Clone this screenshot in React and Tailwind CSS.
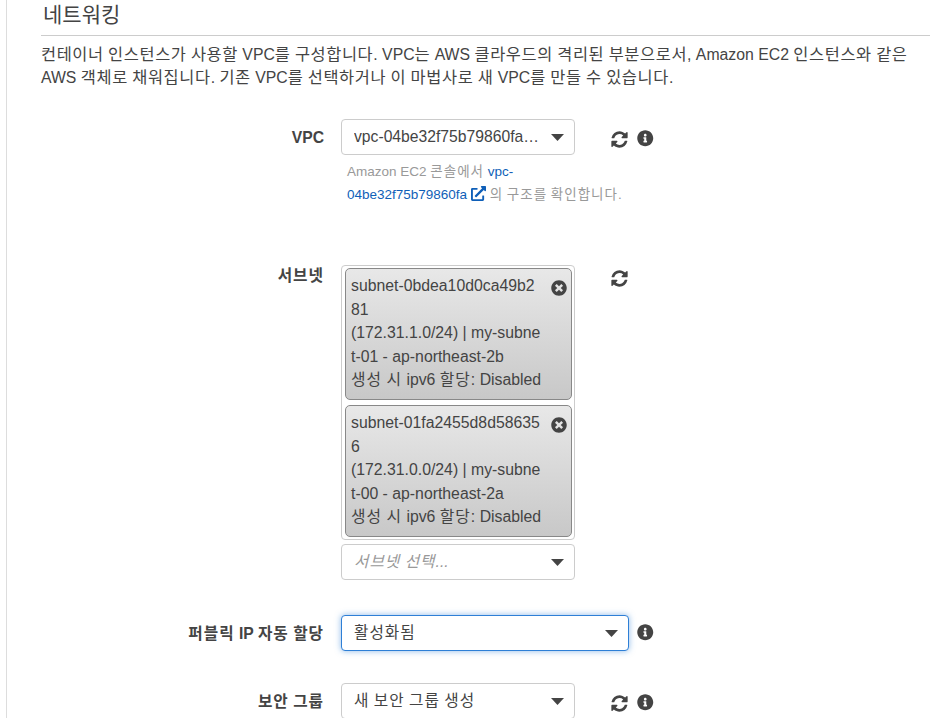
import React from "react";
import { FaInfoCircle, FaTimesCircle, FaExternalLinkAlt } from "react-icons/fa";

function H({ t, cls = "tracking-[1px]" }) {
  return t.split(/([가-힣]+)/).map((s, i) =>
    i % 2 ? (
      <span key={i} className={cls}>{s}</span>
    ) : (
      <React.Fragment key={i}>{s}</React.Fragment>
    )
  );
}

function Caret() {
  return (
    <svg width="13" height="7" viewBox="0 0 13 7" className="shrink-0">
      <path d="M0 0H13L6.5 7Z" fill="#444" />
    </svg>
  );
}

function Select({ children, width = "w-[234px]", focused, placeholder }) {
  return (
    <div
      className={`${width} h-[36px] flex items-center justify-between pl-[12px] pr-[10px] rounded-[4px] bg-white border ${
        focused
          ? "border-[#2e7fd6] shadow-[0_0_6px_rgba(46,127,214,0.55)]"
          : "border-[#ccc]"
      }`}
    >
      <span className={`truncate text-[15.7px] ${placeholder ? "italic text-[#999]" : "text-[#444]"}`}>
        <H t={children} />
      </span>
      <Caret />
    </div>
  );
}

function Row({ label, children, icons, className = "", labelPad = "pt-[9px]" }) {
  return (
    <div className={`flex items-start ${className}`}>
      <div className={`w-[283px] text-right font-bold text-[15.7px] text-[#444] leading-[20px] shrink-0 ${labelPad}`}>
        <H t={label} />
      </div>
      <div className="ml-[17px] shrink-0">{children}</div>
      {icons}
    </div>
  );
}

function Refresh() {
  return (
    <svg viewBox="0 0 1792 1792" className="w-[19px] h-[19px] text-[#444]" fill="currentColor">
      <path d="M1639 1056q0 5-1 7-64 268-268 434.5t-478 166.5q-146 0-282.5-55t-243.5-157l-129 129q-19 19-45 19t-45-19-19-45v-448q0-26 19-45t45-19h448q26 0 45 19t19 45-19 45l-137 137q71 66 161 102t187 36q134 0 250-65t186-179q11-17 53-117 8-23 30-23h192q13 0 22.5 9.5t9.5 22.5zm25-800v448q0 26-19 45t-45 19h-448q-26 0-45-19t-19-45 19-45l138-138q-148-137-349-137-134 0-250 65t-186 179q-11 17-53 117-8 23-30 23h-199q-13 0-22.5-9.5t-9.5-22.5v-7q65-268 270-434.5t480-166.5q146 0 284 55.5t245 156.5l130-129q19-19 45-19t45 19 19 45z" />
    </svg>
  );
}

function Info() {
  return <FaInfoCircle className="text-[#444] w-[16.5px] h-[16.5px] -translate-y-[1px]" />;
}

function Tag({ lines, mt = "" }) {
  return (
    <div className={`relative w-[227px] h-[132px] rounded-[5px] border border-[#888] bg-gradient-to-b from-[#e8e8e8] to-[#c8c8c8] pl-[5px] pt-[5px] text-[15.8px] text-[#444] leading-[23.6px] ${mt}`}>
      {lines.map((l) => (
        <div key={l} className="whitespace-nowrap"><H t={l} /></div>
      ))}
      <FaTimesCircle className="absolute right-[4px] top-[11px] w-[16px] h-[16px] text-[#444]" />
    </div>
  );
}

const para = "text-[16.4px] tracking-[0.6px]";

export default function App() {
  return (
    <div
      className="w-[948px] h-[718px] overflow-hidden bg-white text-[16px] text-[#444]"
      style={{ fontFamily: '"Liberation Sans", "Noto Sans CJK KR", sans-serif' }}
    >
      <div className="ml-[6px] h-full border-l border-[#ddd] pl-[34px]">
        <div className="w-[889px]">
          <h2 className="h-[36px] border-b border-[#ccc] pl-[2px] pt-[1px] text-[21px] leading-[28px] text-[#444] font-normal">네트워킹</h2>
          <p className="mt-[7px] text-[15.8px] leading-[23px] text-[#444] whitespace-nowrap">
            <H cls={para} t="컨테이너 인스턴스가 사용할 VPC를 구성합니다. VPC는 AWS 클라우드의 격리된 부분으로서, Amazon EC2 인스턴스와 같은" />
            <br />
            <H cls={para} t="AWS 객체로 채워집니다. 기존 VPC를 선택하거나 이 마법사로 새 VPC를 만들 수 있습니다." />
          </p>
        </div>

        <Row
          label="VPC"
          className="mt-[30px]"
          icons={
            <div className="ml-[35px] mt-[11px] flex items-center gap-[8px]">
              <Refresh />
              <Info />
            </div>
          }
        >
          <Select>vpc-04be32f75b79860fa…</Select>
          <div className="w-[234px] pl-[6px] mt-[5px] text-[13.5px] leading-[23px] text-[#999] whitespace-nowrap">
            <H t="Amazon EC2 콘솔에서 " />
            <a className="text-[#0f5fb8]">vpc-</a>
            <br />
            <a className="text-[#0f5fb8]">
              04be32f75b79860fa <FaExternalLinkAlt className="inline w-[15px] h-[15px] align-[-2px]" />
            </a>{" "}
            <H t="의 구조를 확인합니다." />
          </div>
        </Row>

        <Row
          label="서브넷"
          labelPad="pt-[1px]"
          className="mt-[59px]"
          icons={
            <div className="ml-[35px] mt-[4px]">
              <Refresh />
            </div>
          }
        >
          <div className="w-[234px] h-[275px] rounded-[4px] border border-[#ccc] pl-[3px] pt-[2px]">
            <Tag lines={["subnet-0bdea10d0ca49b2", "81", "(172.31.1.0/24) | my-subne", "t-01 - ap-northeast-2b", "생성 시 ipv6 할당: Disabled"]} />
            <Tag mt="mt-[5px]" lines={["subnet-01fa2455d8d58635", "6", "(172.31.0.0/24) | my-subne", "t-00 - ap-northeast-2a", "생성 시 ipv6 할당: Disabled"]} />
          </div>
          <div className="mt-[4px]">
            <Select placeholder>서브넷 선택...</Select>
          </div>
        </Row>

        <Row
          label="퍼블릭 IP 자동 할당"
          className="mt-[35px]"
          icons={
            <div className="ml-[8px] mt-[10px]">
              <Info />
            </div>
          }
        >
          <Select width="w-[288px]" focused>활성화됨</Select>
        </Row>

        <Row
          label="보안 그룹"
          className="mt-[32px]"
          icons={
            <div className="ml-[35px] mt-[11px] flex items-center gap-[8px]">
              <Refresh />
              <Info />
            </div>
          }
        >
          <Select>새 보안 그룹 생성</Select>
        </Row>
      </div>
    </div>
  );
}
